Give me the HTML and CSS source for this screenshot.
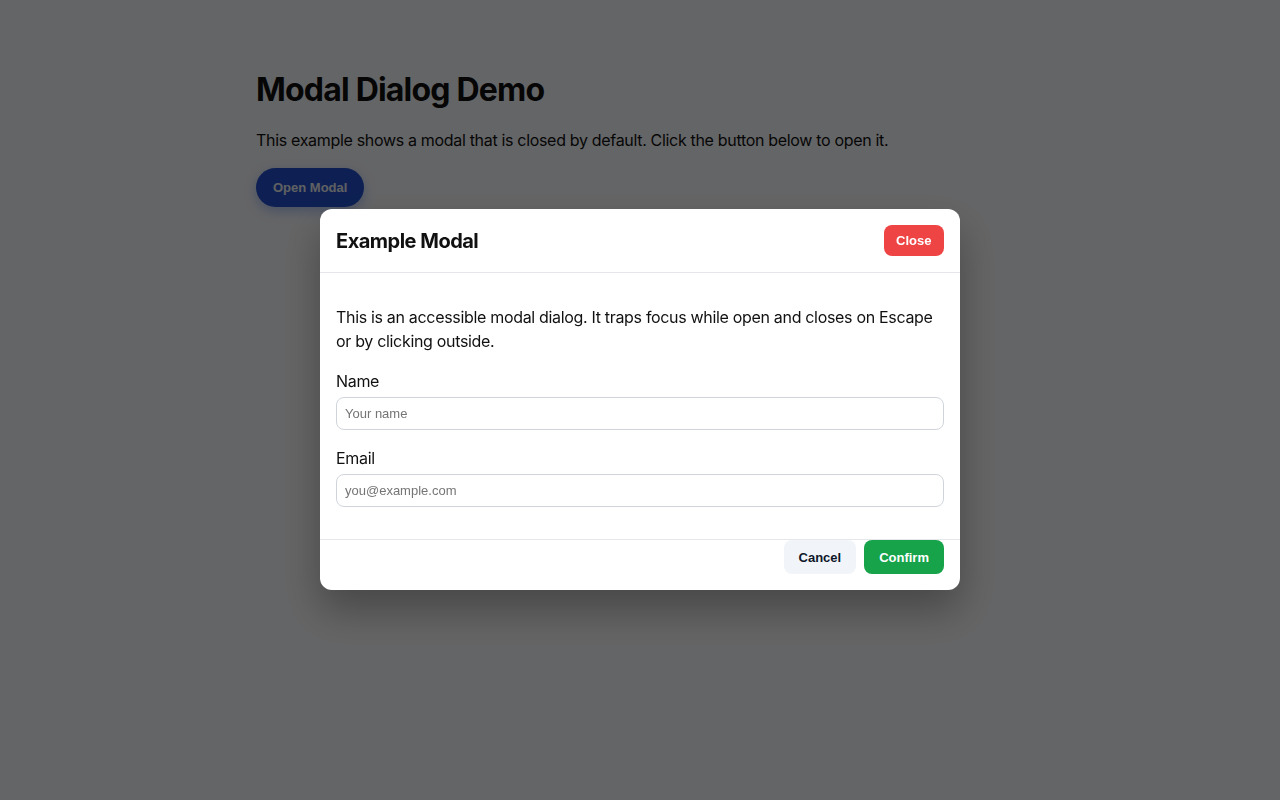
FILE: index.html
```html
<!DOCTYPE html>
<html lang="en">
<head>
    <meta charset="UTF-8">
    <title>Modal Dialog Demo</title>
    <link rel="stylesheet" href="styles.css">
</head>
<body>

<main class="page">
    <h1>Modal Dialog Demo</h1>
    <p>This example shows a modal that is closed by default. Click the button below to open it.</p>
    <button type="button" class="open-btn">Open Modal</button>
</main>

<div class="overlay">
    <div class="modal" role="dialog" aria-modal="true" aria-labelledby="modal-title">
        <div class="modal-header">
            <h2 id="modal-title">Example Modal</h2>
            <button type="button" class="btn close-btn">Close</button>
        </div>
        <div class="modal-body">
            <p>This is an accessible modal dialog. It traps focus while open and closes on Escape or by clicking outside.</p>
            <div class="field">
                <label for="name">Name</label>
                <input type="text" id="name" placeholder="Your name">
            </div>
            <div class="field">
                <label for="email">Email</label>
                <input type="email" id="email" placeholder="you@example.com">
            </div>
        </div>
        <div class="modal-footer">
            <button type="button" class="btn cancel-btn">Cancel</button>
            <button type="button" class="btn confirm-btn">Confirm</button>
        </div>
    </div>
</div>

</body>
</html>
```

FILE: styles.css
```css
body {
    margin: 0;
    font-family: Inter, "Noto Sans", sans-serif;
    letter-spacing: -0.02em;
    color: #111;
    background: #fbfcff;
    line-height: 1.5;
}

button,
input {
    font-family: "Liberation Sans", Arial, sans-serif;
    letter-spacing: 0;
}

.page {
    max-width: 768px;
    margin: 0 auto;
    padding: 64px 0;
}

h1 {
    font-size: 32px;
    line-height: 40px;
    margin: 6px 0 18px;
    font-weight: 700;
    letter-spacing: -0.025em;
}

.page p {
    margin: 0 0 16px;
}

.open-btn {
    padding: 12px 17px;
    font-size: 13px;
    font-weight: 700;
    color: #eef0f5;
    background: #2352d0;
    border: none;
    border-radius: 999px;
    box-shadow: 0 4px 12px rgba(37, 99, 235, 0.35);
}

.overlay {
    position: fixed;
    inset: 0;
    padding-bottom: 1px;
    background: rgba(0, 0, 0, 0.6);
    display: flex;
    align-items: center;
    justify-content: center;
}

.modal {
    width: 640px;
    background: white;
    border-radius: 12px;
    box-shadow: 0 20px 40px rgba(0, 0, 0, 0.3);
}

.modal-header {
    display: flex;
    justify-content: space-between;
    align-items: center;
    padding: 16px;
    border-bottom: 1px solid #e5e7eb;
}

.modal-header h2 {
    margin: 0;
    font-size: 20px;
    line-height: 28px;
    font-weight: 700;
    letter-spacing: -0.025em;
}

.modal-body {
    padding: 16px;
}

.modal-body p {
    margin: 16px 0;
}

.field {
    margin-bottom: 16px;
}

.field label {
    display: block;
    margin-bottom: 4px;
}

.field input {
    display: block;
    box-sizing: border-box;
    width: 100%;
    height: 33px;
    padding: 8px;
    font-size: 13px;
    border: 1px solid #d1d5db;
    border-radius: 8px;
}

.field input::placeholder {
    color: #757575;
}

.modal-footer {
    display: flex;
    justify-content: flex-end;
    gap: 8px;
    padding: 0 16px 16px;
    border-top: 1px solid #e5e7eb;
}

.btn {
    font-size: 13px;
    font-weight: 700;
    border: none;
    border-radius: 8px;
    cursor: pointer;
}

.close-btn {
    height: 31px;
    padding: 0 12.5px;
    background: #ef4444;
    color: white;
}

.cancel-btn,
.confirm-btn {
    height: 34px;
    padding: 0 15px;
}

.cancel-btn {
    background: #f1f5f9;
    color: #0f172a;
}

.confirm-btn {
    background: #16a34a;
    color: white;
}
```
